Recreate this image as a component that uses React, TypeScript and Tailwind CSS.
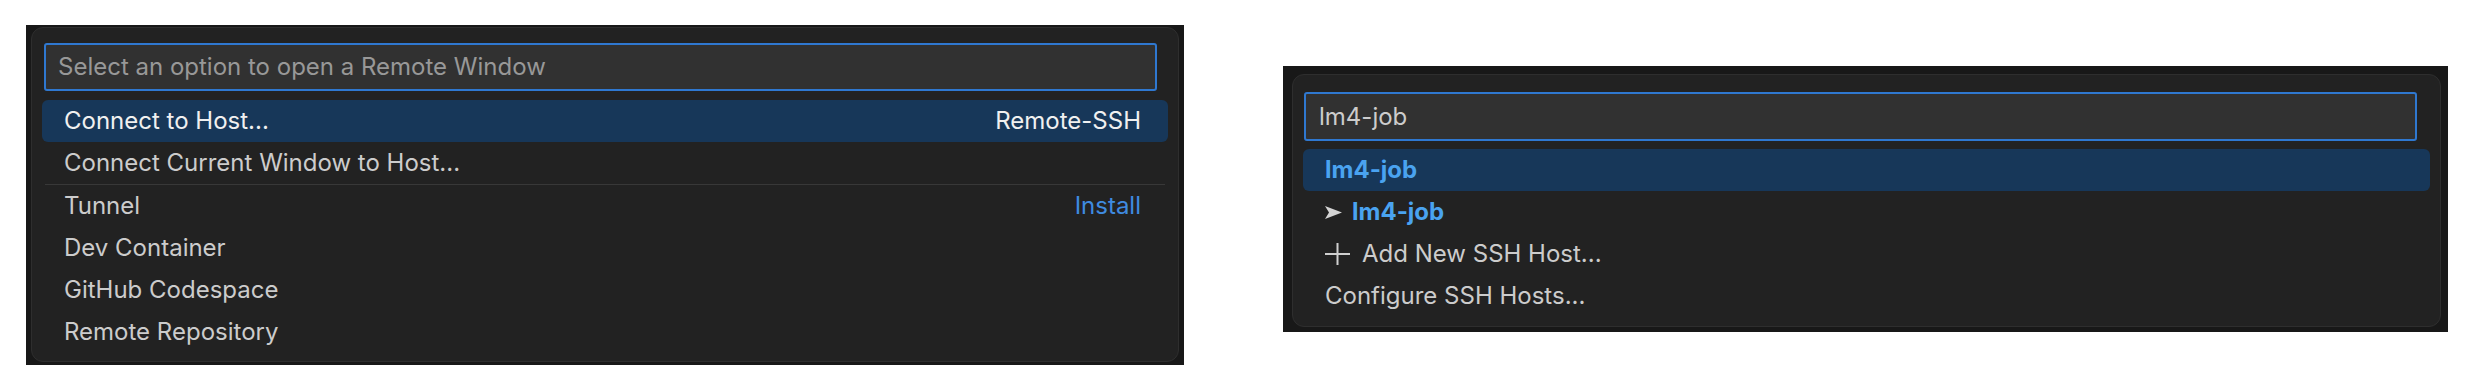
import { ReactNode } from "react";

const font = { fontFamily: "Inter, 'Noto Sans', sans-serif" };

function Row({
  children,
  right,
  active = false,
}: {
  children: ReactNode;
  right?: ReactNode;
  active?: boolean;
}) {
  return (
    <div
      className={
        "flex h-[42px] items-center justify-between rounded-[6px] pl-[22px] pr-[27px] text-[24px] leading-[42px] " +
        (active ? "bg-[#173759] text-[#f0f0f0]" : "text-[#cccccc]")
      }
    >
      <span className="flex items-center">{children}</span>
      {right}
    </div>
  );
}

function Arrow() {
  return (
    <svg width="17" height="13" viewBox="0 0 17 13" className="mr-[10px]">
      <path d="M0 0 L17 6.5 L0 13 L4 6.5 Z" fill="#d4d4d4" />
    </svg>
  );
}

function Plus() {
  return (
    <svg width="25" height="22" viewBox="0 0 25 22" className="mr-[12px]">
      <path d="M0 11 H25 M12.5 0 V22" stroke="#cfcfcf" strokeWidth="2" />
    </svg>
  );
}

export default function App() {
  return (
    <div className="flex min-h-[392px] items-start bg-white pl-[26px]" style={font}>
      {/* Abrir janela remota */}
      <div className="mt-[25px] h-[340px] w-[1158px] bg-[#181818] pl-[5px] pt-[2px]">
        <div className="h-[335px] w-[1148px] rounded-[12px] border border-[#2e2e2e] bg-[#222222] px-[10px] pt-[15px]">
          <div className="ml-[2px] flex h-[48px] w-[1113px] items-center rounded-[3px] border-2 border-[#2f78d0] bg-[#313131] pl-[12px] text-[24px] text-[#989898]">
            Select an option to open a Remote Window
          </div>
          <div className="mt-[9px]">
            <Row active right={<span>Remote-SSH</span>}>
              Connect to Host...
            </Row>
            <Row>Connect Current Window to Host...</Row>
            <div className="mx-[3px] h-px bg-[#383838]" />
            <Row right={<span className="text-[#3f8be0]">Install</span>}>Tunnel</Row>
            <Row>Dev Container</Row>
            <Row>GitHub Codespace</Row>
            <Row>Remote Repository</Row>
          </div>
        </div>
      </div>

      {/* Hosts SSH */}
      <div className="ml-[99px] mt-[66px] h-[266px] w-[1165px] bg-[#181818] pl-[9px] pt-[8px]">
        <div className="h-[253px] w-[1149px] rounded-[12px] border border-[#2e2e2e] bg-[#222222] px-[10px] pt-[17px]">
          <div className="ml-[1px] flex h-[49px] w-[1113px] items-center rounded-[3px] border-2 border-[#2f78d0] bg-[#313131] pl-[13px] text-[24px] text-[#cccccc]">
            lm4-job
          </div>
          <div className="mt-[8px]">
            <Row active>
              <span className="font-bold text-[#4aa3f0]">lm4-job</span>
            </Row>
            <Row>
              <Arrow />
              <span className="font-bold text-[#4aa3f0]">lm4-job</span>
            </Row>
            <Row>
              <Plus />
              Add New SSH Host...
            </Row>
            <Row>Configure SSH Hosts...</Row>
          </div>
        </div>
      </div>
    </div>
  );
}
